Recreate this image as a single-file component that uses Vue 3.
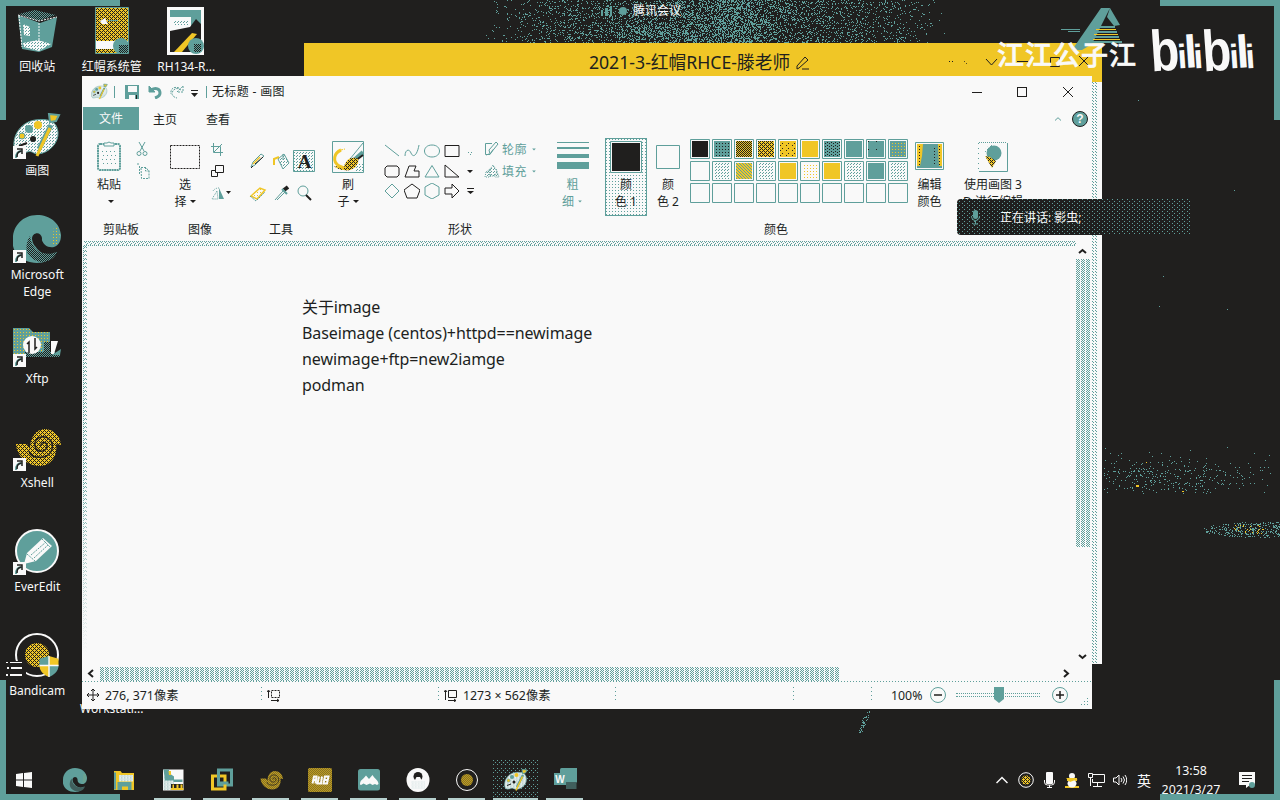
<script setup>
const D = '#201f1e', T = '#5f9f9b', Y = '#f0c626', W = '#f9f9f9'

let seed = 7
function rnd() {
  seed = (seed + 0x6d2b79f5) | 0
  let t = Math.imul(seed ^ (seed >>> 15), 1 | seed)
  t = (t + Math.imul(t ^ (t >>> 7), 61 | t)) ^ t
  return ((t ^ (t >>> 14)) >>> 0) / 4294967296
}
const px = (x, y) => `M${x} ${y}h1v1h-1z`
function scatter(x0, y0, x1, y1, density) {
  let d = ''
  for (let y = y0; y < y1; y++) for (let x = x0; x < x1; x++) if (rnd() < density(x, y)) d += px(x, y)
  return d
}
const bump = (v, c, w) => Math.exp(-((v - c) ** 2) / (w * w))
const nebula = scatter(470, 0, 950, 43, (x, y) => {
  const edge = Math.min(1, Math.max(0, (x - 480) / 90)) * Math.min(1, Math.max(0, (945 - x) / 90))
  return edge * (0.17 + 0.28 * bump(x, 725, 50) + 0.25 * bump(x, 650, 35) * bump(y, 32, 10))
})
const dust = scatter(1104, 438, 1272, 494, (x, y) => 0.085 * bump(y, 476, 15) * (0.35 + bump(x, 1150, 60)))
const disc = scatter(1202, 521, 1280, 538, (x, y) => {
  const r = ((x - 1262) / 60) ** 2 + ((y - 529.5) / 8) ** 2
  return r < 1 ? 0.24 : 0
})
const discGold = scatter(1228, 525, 1264, 534, () => 0.08)
const streak = scatter(858, 711, 870, 733, (x, y) => (Math.abs(x - 868 + (y - 711) * 0.4) < 2.5 ? 0.28 : 0))
const stars = scatter(1104, 90, 1274, 430, () => 0.0001)

const desktop = [
  { k: 'bin', t: ['回收站'] }, { k: 'paint', t: ['画图'], s: 1 }, { k: 'edge', t: ['Microsoft', 'Edge'], s: 1 },
  { k: 'xftp', t: ['Xftp'], s: 1 }, { k: 'shell', t: ['Xshell'], s: 1 }, { k: 'ever', t: ['EverEdit'], s: 1 }, { k: 'bandi', t: ['Bandicam'] },
  { k: 'doc1', t: ['红帽系统管'] }, {}, {}, {}, {}, {}, { t: ['Workstati...'], low: 1 },
  { k: 'doc2', t: ['RH134-R...'] },
]
const tasks = ['edge', 'folder', 'photo', 'vm', 'shell', 'pub', 'meet', 'qq', 'bandi', 'paint', 'word']
const swatches = [
  D, 'url(#dkT)', 'url(#dkW)', 'url(#dkY)', 'url(#spY)', Y, 'url(#dkT2)', T, 'url(#tD)', 'url(#tY)',
  W, 'url(#w25)', 'url(#yT)', 'url(#w25)', Y, 'url(#wY)', Y, 'url(#w25)', T, 'url(#w25)',
  ...Array(10).fill(W),
]
const shapes = [
  'M1 2L15 13', 'M1 13C1 7 5 5 7 10S13 13 15 2', 'M8 2C18 2 18 14 8 14S-2 2 8 2', 'M1 2.5h14v11H1z',
  'M3 3h10l2 2v7l-2 2H3l-2-2V5z', 'M1 14L5 3h7l-2 5h5v6z', 'M8 2.5L15 14H1z', 'M1 2v12h14z',
  'M8 1l7 7-7 7-7-7z', 'M8 1l8 6-3 8H3L0 7z', 'M8 0l7 4v8l-7 4-7-4V4z', 'M1 5h7V1l7 7-7 7v-4H1z',
]
const shapeInk = [T, T, T, D, D, D, T, D, T, D, T, D]
const lines = ['关于image', 'Baseimage (centos)+httpd==newimage', 'newimage+ftp=new2iamge', 'podman']
</script>

<template>
  <div class="screen">
    <svg class="defs" width="0" height="0">
      <defs>
        <pattern id="dkT" width="3" height="3" patternUnits="userSpaceOnUse"><path fill="#5f9f9b" d="M0 0h3v3H0z" /><path fill="#201f1e" d="M1 1h1v1H1z" /></pattern>
        <pattern id="dkT2" width="4" height="3" patternUnits="userSpaceOnUse"><path fill="#5f9f9b" d="M0 0h4v3H0z" /><path fill="#201f1e" d="M1 0h1v1H1zM3 1h1v1H3z" /></pattern>
        <pattern id="dkW" width="2" height="2" patternUnits="userSpaceOnUse"><path fill="#201f1e" d="M0 0h2v2H0z" /><path fill="#f0c626" d="M0 0h1v1H0zM1 1h1v1H1z" /></pattern>
        <pattern id="dkY" width="4" height="4" patternUnits="userSpaceOnUse"><path fill="#f0c626" d="M0 0h4v4H0z" /><path fill="#201f1e" d="M0 0h1v1H0zM2 0h1v1H2zM1 1h1v1H1zM0 2h1v1H0zM2 2h1v1H2zM3 3h1v1H3z" /></pattern>
        <pattern id="spY" width="6" height="5" patternUnits="userSpaceOnUse"><path fill="#f0c626" d="M0 0h6v5H0z" /><path fill="#201f1e" d="M2 1h1v1H2zM4 4h1v1H4z" /></pattern>
        <pattern id="tY" width="3" height="3" patternUnits="userSpaceOnUse"><path fill="#5f9f9b" d="M0 0h3v3H0z" /><path fill="#f0c626" d="M1 1h1v1H1z" /></pattern>
        <pattern id="tD" width="8" height="8" patternUnits="userSpaceOnUse"><path fill="#5f9f9b" d="M0 0h8v8H0z" /><path fill="#201f1e" d="M2 2h1v1H2z" /></pattern>
        <pattern id="yT" width="3" height="3" patternUnits="userSpaceOnUse"><path fill="#f0c626" d="M0 0h3v3H0z" /><path fill="#5f9f9b" d="M0 0h1v1H0zM1 1h1v1H1zM2 2h1v1H2z" /></pattern>
        <pattern id="wY" width="3" height="3" patternUnits="userSpaceOnUse"><path fill="#f9f9f9" d="M0 0h3v3H0z" /><path fill="#f0c626" d="M1 1h1v1H1z" /></pattern>
        <pattern id="w25" width="3" height="3" patternUnits="userSpaceOnUse"><path fill="#f9f9f9" d="M0 0h3v3H0z" /><path fill="#5f9f9b" d="M0 0h1v1H0zM1 2h1v1H1z" /></pattern>
        <pattern id="kT" width="2" height="2" patternUnits="userSpaceOnUse"><path fill="#201f1e" d="M0 0h2v2H0z" /><path fill="#5f9f9b" d="M0 0h1v1H0zM1 1h1v1H1z" /></pattern>

        <symbol id="bin" viewBox="0 0 48 48">
          <path fill="#5f9f9b" d="M5 8l4 34 17 3 13-5 5-30-17 6z" /><path fill="url(#kT)" d="M6 7L22 3l21 5-18 6z" />
          <path fill="none" stroke="#f9f9f9" stroke-width="1" stroke-dasharray="2 1" d="M5 8l21 6 18-4M26 16v24M6 9l3 31" />
          <path fill="url(#w25)" d="M10 17l7 3v9l-6-1zM10 36l15-3 13 4-12 7-15-4z" />
        </symbol>
        <symbol id="paint" viewBox="0 0 48 48">
          <path fill="url(#w25)" stroke="#5f9f9b" d="M22 9C9 11 0 23 1 35c1 9 7 8 13 6 5-2 6 2 11 2 11-1 21-11 20-22S35 7 22 9z" />
          <circle cx="16" cy="18" r="4" fill="#5f9f9b" /><circle cx="25" cy="14" r="4" fill="#f0c626" /><circle cx="9" cy="25" r="3" fill="#f0c626" stroke="#5f9f9b" /><circle cx="20" cy="28" r="3" fill="#201f1e" /><path d="M6 35l8-3" stroke="#201f1e" stroke-width="2" />
          <path stroke="#5f9f9b" stroke-width="5" d="M38 14L26 38" /><path stroke="#f0c626" stroke-width="3" d="M37 17L28 36l-4 9" /><path fill="#f0c626" stroke="#5f9f9b" stroke-width="2" d="M36 3l10 1-3 6-6 1z" />
        </symbol>
        <symbol id="edge" viewBox="0 0 48 48">
          <path fill="#5f9f9b" d="M24 0C10 0 0 11 0 23v8c2 10 12 17 24 17 8 0 15-4 19-11-8 5-17 1-20-5 3 0 6-5 5-11 1 10 8 12 13 11 5-2 7-6 7-12C47 8 37 0 24 0z" />
          <path fill="#201f1e" d="M19 24c0-7 9-8 10-1 0 4-3 8 5 10-10 3-14-2-15-9z" /><path fill="url(#kT)" d="M17 21c-7 11-4 23 11 26 8 0 14-4 16-10-12 5-25 0-27-16z" />
          <path fill="url(#tY)" d="M41 12h4l2 8-3 9h-5z" />
        </symbol>
        <symbol id="xftp" viewBox="0 0 48 48">
          <path fill="url(#tY)" d="M0 9h16l4 4h17v23H0z" /><path fill="url(#kT)" d="M12 33h35v5H12zM31 23h6v13h-6z" /><path fill="#f9f9f9" d="M38 22h7l-4 13h-3z" /><path fill="#5f9f9b" d="M39 36l9-6-1 6z" />
          <circle cx="19" cy="26" r="9" fill="#f9f9f9" /><path fill="none" stroke="#201f1e" stroke-width="1.500" d="M16 34V23l-2 2M22 19v11l2-2" />
        </symbol>
        <symbol id="shell" viewBox="0 0 48 48">
          <path fill="url(#dkY)" d="M3 21h11l3 5c0-12 6-19 14-20 9 0 16 6 17 16l-5-1c2 13-6 22-16 22C14 43 4 33 3 21z" />
          <path fill="none" stroke="#201f1e" stroke-width="1.500" d="M16 28c1 4 4 6 8 6 11 2 17-6 15-14-4-10-19-7-17 3 2 8 13 6 12-1-1-4-7-3-6 1" />
        </symbol>
        <symbol id="ever" viewBox="0 0 48 48">
          <circle cx="24" cy="24" r="21" fill="#5f9f9b" stroke="#f9f9f9" stroke-width="2" /><path fill="#f9f9f9" d="M11 37l3-11 16-15 9 8-16 15z" /><path fill="none" stroke="#5f9f9b" stroke-dasharray="2 1" d="M14 27l8 7M18 28l15-13M21 31l14-13M29 12l8 8" />
        </symbol>
        <symbol id="bandi" viewBox="0 0 48 48">
          <circle cx="24" cy="24" r="21" fill="none" stroke="#f9f9f9" stroke-width="2" /><circle cx="24" cy="24" r="12" fill="url(#dkY)" />
        </symbol>
        <symbol id="shield" viewBox="0 0 20 22"><path fill="#5f9f9b" d="M10 0v10H0V3zM10 10h10c0 6-5 10-10 12z" /><path fill="#f0c626" d="M10 0l10 3v7H10zM0 10h10v12C5 20 0 16 0 10z" /><path stroke="#f9f9f9" stroke-width="1.500" d="M10 0v22M0 10h20" /></symbol>
        <symbol id="doc1" viewBox="0 0 48 48">
          <path fill="url(#dkY)" stroke="#5f9f9b" d="M7.500.500h33v46h-33z" /><path fill="#f9f9f9" d="M8 34h32v8H8zM12 14l5-3 2 4 1 2h-6z" /><path fill="#5f9f9b" d="M20 13h10v1H20z" /><circle cx="33" cy="39" r="8" fill="#5f9f9b" /><path fill="url(#kT)" d="M31 38h9v8h-9z" />
        </symbol>
        <symbol id="doc2" viewBox="0 0 48 48">
          <path fill="#f9f9f9" d="M5 0h37v48H5z" /><path fill="#5f9f9b" d="M8 3h31v7H8zM29 10h10v24H29z" /><path fill="#201f1e" d="M8 24l20-4 6-8 5 5v15l-6 9v4H8z" /><path fill="#f0c626" d="M30 26l5 1-15 18h-8z" /><circle cx="34" cy="39" r="8" fill="#5f9f9b" /><path fill="url(#kT)" d="M32 37h7v8h-7z" /><path fill="url(#w25)" d="M12 14h14v4H12z" />
        </symbol>
        <symbol id="folder" viewBox="0 0 48 48"><path fill="#f0c626" d="M4 6h13l3 4h24v34H4z" /><path fill="url(#w25)" d="M14 14h28v13H14z" /><path fill="#5f9f9b" d="M11 28h28v16h-7v-7H20v7h-9zM4 9h4v34H4z" /></symbol>
        <symbol id="photo" viewBox="0 0 48 48"><path fill="#f9f9f9" d="M4 3h41v42H4z" /><path fill="url(#w25)" d="M5 17h21v27H5z" /><path fill="#5f9f9b" d="M5 3h11v7l10 7v8H8zM25 23h18v5H25z" /><path fill="#201f1e" d="M20 32h24v11H20z" /><path fill="#f0c626" d="M15 6h5v8h-4zM20 40h25v4H20zM23 33h3v8h-3zM31 33h4v8h-4zM39 33h4v8h-4z" /></symbol>
        <symbol id="vm" viewBox="0 0 48 48"><path fill="none" stroke="#5f9f9b" stroke-width="6" d="M17 4h26v30H17z" /><path fill="none" stroke="#f0c626" stroke-width="6" d="M5 16h25v26H5z" /><path stroke="#5f9f9b" stroke-width="6" d="M17 12v18h20" fill="none" /></symbol>
        <symbol id="pub" viewBox="0 0 48 48"><rect width="48" height="48" rx="3" fill="url(#dkY)" /><path fill="none" stroke="#f9f9f9" stroke-width="4" d="M9 31l3-14h5l-2 14M22 17l-3 14h7l2-14M31 31l3-14h7l-3 14zM11 24h6M32 24h7" /></symbol>
        <symbol id="meet" viewBox="0 0 48 48"><rect x="2" y="2" width="44" height="43" rx="5" fill="#5f9f9b" /><path fill="#f9f9f9" d="M6 33c0-10 5-8 12-18l6 7 7-8c4 8 12 10 12 18l-3 2-4-2-5 2-5-3-7 3-6-3-5 3z" /></symbol>
        <symbol id="qq" viewBox="0 0 48 48"><ellipse cx="24" cy="24" rx="23" ry="24" fill="#f9f9f9" /><circle cx="24" cy="17" r="9" fill="#201f1e" /><path fill="#f9f9f9" d="M21 18h7l4 8H17z" /><path fill="url(#w25)" d="M10 26h28v16H10z" opacity=".3" /></symbol>
        <symbol id="word" viewBox="0 0 48 48"><path fill="#5f9f9b" d="M14 3q0-3 3-3h31v29H14z" /><path fill="url(#kT)" d="M26 29h21v13H26z" /><path fill="#5f9f9b" d="M2 10h24v24H2z" /><text x="14" y="30" text-anchor="middle" class="wletter">W</text></symbol>
        <symbol id="arrow" viewBox="0 0 13 13"><path fill="#f9f9f9" d="M0 0h13v13H0z" /><path fill="none" stroke="#5f9f9b" stroke-width="2" d="M3 12c0-5 2-7 6-7" /><path fill="none" stroke="#201f1e" stroke-width="1.500" d="M4 11c0-4 1-5 4-6M4 3h5v5" /></symbol>
      </defs>
    </svg>

    <svg class="wall" width="1280" height="800" shape-rendering="crispEdges">
      <path :d="nebula + dust + disc + streak + stars" fill="#5f9f9b" />
      <path :d="discGold" fill="#f0c626" /><path d="M1136 485h3v2h-3zM1182 491h2v1h-2zM1146 462h1v1h-1z" fill="#f0c626" />
    </svg>

    <div class="meeting">
      <svg width="27" height="10"><path fill="#5f9f9b" d="M0 4h2v6H0zM4 3h3v7H4zM9 0h2v10H9z" /><circle cx="22" cy="5" r="4" fill="#5f9f9b" /></svg>
      <span>腾讯会议</span>
    </div>

    <div class="desk">
      <div v-for="(d, i) in desktop" :key="i" class="dicon" :class="{ low: d.low }">
        <div class="pic">
          <svg v-if="d.k" width="48" height="48"><use :href="'#' + d.k" /></svg>
          <svg v-if="d.s" class="badge" width="13" height="13"><use href="#arrow" /></svg>
          <svg v-if="d.k === 'bandi'" class="badge sh" width="20" height="21"><use href="#shield" /></svg>
          <svg v-if="d.k === 'bandi'" class="badge ls" width="20" height="16"><path fill="#201f1e" d="M4 0h16v16H4z" /><path fill="#f9f9f9" d="M0 1h2v1H0zM4 1h12v1H4zM1 6h2v2H1zM5 6h11v2H5zM0 13h2v2H0zM4 13h12v2H4z" /></svg>
        </div>
        <span v-for="t in d.t" :key="t">{{ t }}</span>
      </div>
    </div>

    <div class="backwin">
      <div class="backtitle">
        <span>2021-3-红帽RHCE-滕老师</span>
        <svg width="14" height="14" fill="none" stroke="#201f1e"><path d="M1 13v-3l8-9 3 3-9 8zM6 13h7" /></svg>
      </div>
    </div>
    <svg class="backbtns" width="150" height="22" fill="none" stroke="#201f1e"><path stroke-dasharray="1 2" d="M4 9.500h6M19 9l4 4" /><path d="M41 7l5.500 6L52 7M72 9.500h11M105.500 5.500h9v9h-9zM134 4l10 10M144 4l-10 10" /></svg>

    <main class="win">
      <header class="title">
        <svg class="pal" width="17" height="17"><use href="#paint" /></svg>
        <i class="sep"></i>
        <svg class="qa" width="14" height="14"><path fill="#5f9f9b" d="M0 0h14v14H0z" /><path fill="#f9f9f9" d="M3 1h9v6H3zM4 10h6v4H4z" /><path fill="#201f1e" d="M11 10h1v4h-1z" /></svg>
        <svg class="undo" width="14" height="14" fill="none" stroke="#5f9f9b"><path fill="#5f9f9b" d="M1 1v6h6z" /><path stroke-width="3" d="M3 5c5-3 9-1 9 3 0 2-2 4-5 5" /></svg>
        <svg class="redo" width="14" height="14" fill="none" stroke="#5f9f9b" stroke-dasharray="2 1"><path d="M13 1v6H7zM11 5C7 2 3 4 2 8c0 2 1 4 5 5M9 3C4 1 0 4 1 9" /></svg>
        <svg class="more" width="7" height="7"><path fill="#201f1e" d="M0 0h7v1H0zM0 3h7L3.500 7z" /></svg>
        <i class="sep s2"></i>
        <span>无标题 - 画图</span>
        <svg class="ctl" width="104" height="12" fill="none" stroke="#201f1e" shape-rendering="crispEdges"><path d="M0 6.500h10M45.500 1.500h9v9h-9zM91 1l10 10M101 1L91 11" /></svg>
      </header>
      <nav class="tabs">
        <b>文件</b><span>主页</span><span>查看</span>
        <svg width="6" height="4" fill="none" stroke="#5f9f9b"><path d="M0 3.500L3 .7l3 2.800" /></svg>
        <em>?</em>
      </nav>

      <section class="ribbon">
        <div class="grp" style="--w: 78px">
          <div class="body clip">
            <div class="big">
              <svg width="26" height="34"><rect x="2" y="4" width="22" height="26" rx="2" fill="none" stroke="#5f9f9b" stroke-width="2" stroke-dasharray="2 .5" /><path fill="#f9f9f9" stroke="#5f9f9b" d="M8 6V3h3l2-1 2 1h3v3z" /><path stroke="#5f9f9b" stroke-dasharray="1 3" d="M6 11.500h15M7 15.500h14M6 19.500h14M7 23.500h14" /></svg>
              <span>粘贴</span><span><i class="dn solo"></i></span>
            </div>
            <div class="stack">
              <svg width="14" height="16" fill="none" stroke="#5f9f9b"><path d="M3 1l5 9M9 1L4 10" /><circle cx="3" cy="12.500" r="2" /><circle cx="9" cy="12.500" r="2" /></svg>
              <svg width="14" height="16" fill="none" stroke="#5f9f9b" stroke-dasharray="2 1"><path d="M1 1h3M3.500 3v8M5 4.500h5l3 4v7H5.500zM9.500 4v4h4" /></svg>
            </div>
          </div>
          <label>剪贴板</label>
        </div>
        <div class="grp" style="--w: 80px">
          <div class="body img">
            <div class="big">
              <svg width="30" height="34"><path d="M.5 5.500h29v23H.5z" fill="none" stroke="#201f1e" stroke-dasharray="2 1" /></svg>
              <span>选</span><span>择<i class="dn r"></i></span>
            </div>
            <div class="stack s3">
              <svg width="22" height="13" fill="none" stroke="#5f9f9b"><path d="M2.500 0v9.500H12M0 3.500h9.500V13M3 9l8-8" /></svg>
              <svg width="22" height="13" fill="none" stroke="#201f1e"><path d="M4.500.5h8v7h-8zM4 5.500H.5v6h6V8" /></svg>
              <svg width="22" height="13"><path fill="#5f9f9b" d="M8 1l5 11H8z" /><path fill="none" stroke="#5f9f9b" stroke-dasharray="1 1" d="M6 4L1 12h6zM2 4q2-3 6-3" /><path fill="#201f1e" d="M15 4h5l-2.500 3z" /></svg>
            </div>
          </div>
          <label>图像</label>
        </div>
        <div class="grp" style="--w: 82px">
          <div class="body tools">
            <svg width="22" height="22" fill="none"><path stroke="#5f9f9b" d="M4 17l2-5 8-8 3 2-9 9z" /><path stroke="#f0c626" stroke-width="1.500" d="M6 14l7-7" /><path stroke="#201f1e" d="M4 18l2-2M8 14l8-7" /></svg>
            <svg width="22" height="22" fill="none"><path fill="url(#w25)" stroke="#5f9f9b" d="M7 9l6-5 5 9-6 6zM12 10V4" /><path stroke="#f0c626" stroke-width="2" d="M3 15V9l5-2" /></svg>
            <svg width="22" height="22"><path fill="url(#w25)" stroke="#5f9f9b" d="M.5.5h21v21H.5z" /><text x="11.500" y="18" text-anchor="middle" class="ta">A</text></svg>
            <svg width="22" height="22"><path fill="url(#wY)" stroke="#f0c626" stroke-width="1.500" d="M4 14l9-8 5 2-8 9z" /><path fill="none" stroke="#5f9f9b" stroke-dasharray="2 1" d="M3 14l6 5 9-9" /></svg>
            <svg width="22" height="22" fill="none"><path stroke="#5f9f9b" d="M4 18l8-9M6 18l8-8" /><path stroke="#201f1e" stroke-width="4" d="M13 8l4-3" /><path stroke="#5f9f9b" stroke-width="2" d="M11 7l5 5" /></svg>
            <svg width="22" height="22" fill="none"><circle cx="10" cy="9" r="5" stroke="#5f9f9b" /><path stroke="#201f1e" stroke-width="2" d="M13 13l5 5" /></svg>
          </div>
          <label>工具</label>
        </div>
        <div class="grp" style="--w: 52px">
          <div class="body ctr">
            <div class="big">
              <svg width="32" height="34"><path fill="#f9f9f9" stroke="#5f9f9b" d="M.5 1.500h31v31H.5z" /><path stroke="#5f9f9b" fill="none" d="M31 3L18 19" /><path stroke="#5f9f9b" stroke-width="4" d="M31 12l-9 8" /><path stroke="#201f1e" stroke-width="2" d="M31 15l-8 6" /><path fill="url(#dkY)" d="M12 27c2-8 8-11 14-8 2 8-8 13-14 11-4 0-8-2-10-4z" /><path fill="none" stroke="#f0c626" stroke-width="3" d="M9 10C2 13 0 21 7 26l5 2" /><path fill="none" stroke="#f0c626" stroke-dasharray="2 1" d="M9 10l4-1" /><path fill="url(#w25)" d="M25 24h6v8h-8z" /></svg>
              <span>刷</span><span>子<i class="dn r"></i></span>
            </div>
          </div>
        </div>
        <div class="grp" style="--w: 172px">
          <div class="body shp">
            <div class="gal">
              <svg v-for="(s, i) in shapes" :key="i" width="16" height="16" fill="none" :stroke="shapeInk[i]"><path :d="s" /></svg>
            </div>
            <svg width="9" height="60"><path fill="#5f9f9b" d="M2 12h1v1H2zM5 12h1v1H5zM4 14h1v1H4z" /><path fill="#201f1e" d="M1 30h6l-3 3zM1 48h7v1H1zM1 51h7l-3.500 3z" /></svg>
            <div class="fills">
              <div><svg width="16" height="16" fill="none" stroke="#5f9f9b"><path d="M8 2.500H1.500v11H6l3-5M6 13L14 3l-2-2-7 8zM5 13l-3 1" /></svg>轮廓<i class="dn t"></i></div>
              <div><svg width="16" height="16" fill="url(#w25)" stroke="#5f9f9b" stroke-dasharray="1 1"><path d="M5 8l4-6 4 6-2 5H6zM2 9l4-3v8H1zM12 6l3 8h-4" /></svg>填充<i class="dn t"></i></div>
            </div>
          </div>
          <label>形状</label>
        </div>
        <div class="grp" style="--w: 53px">
          <div class="body ctr">
            <div class="big teal">
              <svg width="32" height="34"><path fill="#5f9f9b" d="M0 2h32v1H0zM0 7h32v2H0zM0 14h32v4H0zM0 22h32v7H0z" /></svg>
              <span>粗</span><span>细<i class="dn r t"></i></span>
            </div>
          </div>
        </div>
        <div class="grp" style="--w: 354px">
          <div class="body cols">
            <div class="big c1"><svg width="32" height="32"><path fill="#f9f9f9" stroke="#5f9f9b" d="M.5.500h31v31H.5z" /><path fill="#201f1e" d="M2 2h28v28H2z" /></svg><span>颜</span><span>色 1</span></div>
            <div class="big c2"><svg width="24" height="34"><path fill="none" stroke="#5f9f9b" d="M.5 5.500h23v23H.5z" /></svg><span>颜</span><span>色 2</span></div>
            <div class="sw">
              <svg v-for="(c, i) in swatches" :key="i" width="20" height="20"><path fill="#f9f9f9" stroke="#5f9f9b" d="M.5.5h19v19H.5z" /><path :fill="c" d="M2 2h16v16H2z" /></svg>
            </div>
            <div class="big c3"><svg width="29" height="34"><path fill="#f9f9f9" stroke="#5f9f9b" d="M.5 2.500h28v27H.5z" /><path fill="#5f9f9b" d="M2 4h25v24H2z" /><path fill="#f0c626" d="M2 4h6l-1 12-2 10H2zM23 4h4v22h-3z" /><path fill="none" stroke="#201f1e" stroke-dasharray="1 2" d="M4.500 6v20M19.500 8v18M24.500 6v20" /></svg><span>编辑</span><span>颜色</span></div>
          </div>
          <label>颜色</label>
        </div>
        <div class="grp" style="--w: 80px">
          <div class="body ctr">
            <div class="big">
              <svg width="30" height="34"><path fill="none" stroke="#5f9f9b" stroke-dasharray="1 1" d="M1 2.500h28" /><path fill="none" stroke="#5f9f9b" stroke-dasharray="1 4" d="M.5 3v28" /><path fill="none" stroke="#5f9f9b" d="M1 31.500h28.500V3" /><path fill="url(#w25)" d="M7 13c0-7 5-8 9-8v19z" /><circle cx="16" cy="13" r="7.500" fill="#5f9f9b" /><path fill="url(#dkY)" d="M7 16l5 1 6 4-4 7z" /></svg>
              <span>使用画图 3</span><span>D 进行编辑</span>
            </div>
          </div>
        </div>
      </section>

      <section class="work">
        <div class="strip"></div>
        <article><p v-for="(l, i) in lines" :key="i" :class="'l' + i">{{ l }}</p></article>
        <div class="vbar">
          <svg width="14" height="13" fill="none" stroke="#201f1e" stroke-width="2"><path d="M3 7l3.500-3L10 7" /></svg>
          <i></i>
          <svg width="14" height="13" fill="none" stroke="#201f1e" stroke-width="2"><path d="M3 4l3.500 3L10 4" /></svg>
        </div>
      </section>
      <div class="hbar">
        <svg width="18" height="14" fill="none" stroke="#201f1e" stroke-width="2"><path d="M11 3L7 6.500l4 3.500" /></svg><i></i>
        <svg class="rt" width="18" height="14" fill="none" stroke="#201f1e" stroke-width="2"><path d="M7 3l4 3.500L7 10" /></svg>
      </div>
      <footer>
        <div class="cell a"><svg width="12" height="12" fill="none" stroke="#201f1e"><path d="M6 0v12M0 6h12M4 2l2-2 2 2M4 10l2 2 2-2M2 4L0 6l2 2M10 4l2 2-2 2" /></svg>276, 371像素</div>
        <div class="cell b"><svg width="13" height="13" fill="none" stroke="#201f1e"><path d="M1.500 2v7M0 3l1.500-2L3 3M4 11.500h8M10 10l2 1.500-2 1.500" /><path stroke-dasharray="2 1" d="M4.500 1.500h8v7h-8z" /></svg></div>
        <div class="cell c"><svg width="13" height="13" fill="none" stroke="#201f1e"><path d="M1.500 2v9M0 3l1.500-2L3 3M4 11.500h8M10 10l2 1.500-2 1.500M4.500 1.500h8v7h-8z" /></svg>1273 × 562像素</div>
        <div class="cell d"></div><div class="cell e"></div>
        <div class="zoom">
          <span>100%</span>
          <svg width="16" height="16"><circle cx="8" cy="8" r="7.500" fill="none" stroke="#5f9f9b" /><path stroke="#201f1e" stroke-width="1.500" d="M4 8h8" /></svg>
          <div class="track"><i></i></div>
          <svg width="16" height="16"><circle cx="8" cy="8" r="7.500" fill="none" stroke="#5f9f9b" /><path stroke="#201f1e" stroke-width="1.500" d="M4 8h8M8 4v8" /></svg>
          <svg class="grip" width="8" height="8" fill="#5f9f9b"><path d="M6 0h1v1H6zM3 3h1v1H3zM6 3h1v1H6zM0 6h1v1H0zM3 6h1v1H3zM6 6h1v1H6z" /></svg>
        </div>
      </footer>
    </main>

    <div class="speak">
      <svg width="9" height="15"><rect x="2" y="0" width="5" height="9" rx="2.500" fill="#5f9f9b" /><path fill="none" stroke="#5f9f9b" d="M.5 6c0 6 8 6 8 0M4.500 11v3M2 14h5" /></svg>
      <span>正在讲话: 影虫;</span>
    </div>

    <svg class="mark" width="290" height="100">
      <path fill="#5f9f9b" d="M111 8h9l-18 36-10 6H82zM120 8l10 17-6 1-7-9zM71 29h19v1H71zM78 31h12v1H78z" />
      <path stroke="#f0c626" d="M106 29.500h20M104 34.500h24M103 39.500h27" /><path stroke="#5f9f9b" stroke-width="2" d="M105 27h20M103 32h24M102 37h27M101 42h31" />
      <text x="7" y="65" textLength="139" class="name" lengthAdjust="spacing">江江公子江</text>
      <g class="bili" transform="rotate(-4 210 50)">
        <text x="160" y="68" class="lb" textLength="29" lengthAdjust="spacingAndGlyphs">b</text><text x="187" y="67" class="li">i</text><text x="194" y="67" class="ll">l</text><text x="203" y="68" class="li">i</text>
      </g>
      <g class="bili" transform="rotate(-4 262 50)">
        <text x="212" y="68" class="lb" textLength="29" lengthAdjust="spacingAndGlyphs">b</text><text x="239" y="67" class="li">i</text><text x="246" y="67" class="ll">l</text><text x="255" y="68" class="li">i</text>
      </g>
    </svg>

    <div class="taskbar">
      <div class="start"><svg width="16" height="16" fill="#f9f9f9"><path d="M0 2l7-1v6.500H0zM8 1l8-1v7.500H8zM0 8.500h7V15l-7-1zM8 8.500h8V16l-8-1z" /></svg></div>
      <div v-for="(k, i) in tasks" :key="k" class="task" :class="{ run: i > 1, act: k === 'paint' }"><svg width="24" height="24"><use :href="'#' + k" /></svg></div>
      <div class="tray">
        <svg width="12" height="8" fill="none" stroke="#f9f9f9" stroke-width="1.500"><path d="M.5 7L6 1.500 11.500 7" /></svg>
        <svg class="m2" width="16" height="16"><circle cx="8" cy="8" r="7.300" fill="none" stroke="#f9f9f9" /><circle cx="8" cy="8" r="4.500" fill="url(#dkY)" /></svg>
        <svg class="m2" width="11" height="16" fill="none" stroke="#f9f9f9"><rect x="2" y="0" width="7" height="12" rx="1" fill="#f9f9f9" stroke="none" /><path d="M.5 8v2q0 3 3 3h4q3 0 3-3V8M5.500 13v2M3 15.500h5" /></svg>
        <svg class="m2" width="14" height="15"><circle cx="7" cy="3" r="3" fill="#f9f9f9" /><path fill="#f0c626" d="M2 5h10v3H2zM0 13h14v2H0z" /><ellipse cx="7" cy="10.500" rx="4.500" ry="4" fill="#f9f9f9" /><path fill="#f0c626" d="M1 5l12 1-8 3z" /></svg>
        <svg class="m1" width="17" height="14" fill="none" stroke="#f9f9f9"><path d="M5 1.500h11.500v8h-12V6M.5.5h4v4h-4zM2.500 5v8M9.500 10v3M5 13.500h9" /></svg>
        <svg width="14" height="12" fill="none" stroke="#f9f9f9"><path d="M.5 4v4H3l3 3V1L3 4zM8 4q2 2 0 4M10 2.500q3 3.500 0 7M12 1q3.500 5 0 10" /></svg>
        <span class="ime">英</span>
        <div class="clock"><span>13:58</span><span>2021/3/27</span></div>
        <svg class="note" width="17" height="17"><path fill="#f9f9f9" d="M0 0h16v13h-5l-4 3v-3H0z" /><path stroke="#201f1e" d="M3 3.500h10M3 6.500h10M3 9.500h7" /><circle cx="13" cy="13" r="3" fill="#5f9f9b" /></svg>
      </div>
    </div>

    <i class="fr tl"></i><i class="fr tr"></i><i class="fr bl"></i><i class="fr br"></i>
  </div>
</template>

<style>
html, body { background: #201f1e; overflow: hidden; }
</style>

<style scoped>
.screen { --dot: conic-gradient(at 1px 1px, transparent 75%, #5f9f9b 0); position: relative; width: 1280px; height: 800px; overflow: hidden; background: #201f1e; color: #201f1e; font: 12px/17px "Noto Sans", "Noto Sans CJK SC", sans-serif; }
svg { display: block; flex: none; }
.defs, .wall { position: absolute; left: 0; top: 0; }
.wletter { font: bold 20px "Liberation Sans", sans-serif; fill: #f9f9f9; }
.ta { font: bold 19px "Liberation Serif", serif; fill: #201f1e; }
.meeting { position: absolute; left: 601px; top: 2px; display: flex; align-items: center; gap: 5px; color: #f9f9f9; }
.desk { position: absolute; left: 0; top: 7px; display: grid; grid-template-rows: repeat(7, 104px); grid-auto-columns: 74.5px; grid-auto-flow: column; }
.dicon { display: flex; flex-direction: column; align-items: center; color: #f9f9f9; white-space: nowrap; }
.dicon.low { justify-content: flex-end; padding-bottom: 18px; box-sizing: border-box; }
.dicon.low .pic { display: none; }
.pic { position: relative; width: 48px; height: 48px; margin-bottom: 3px; }
.badge { position: absolute; left: 0; bottom: 0; }
.badge.sh { left: 26px; bottom: 2px; }
.badge.ls { left: -7px; bottom: 2px; }
.backwin { position: absolute; left: 304px; top: 43px; width: 798px; height: 621px; background: #f9f9f9; }
.backtitle { height: 39px; background: #f0c626; display: flex; justify-content: center; align-items: center; gap: 6px; font-size: 17.700px; box-sizing: border-box; padding-right: 7px; }
.backwin::after { content: ""; position: absolute; left: 788px; top: 39px; width: 6px; height: 581px; background: var(--dot) 0 0 / 3px 3px, var(--dot) 1px 1px / 3px 3px; }
.backbtns { position: absolute; left: 945px; top: 52px; }
.win { position: absolute; left: 82px; top: 76px; width: 1010px; height: 633px; background: #f9f9f9; display: flex; flex-direction: column; }
.title { height: 31px; display: flex; align-items: center; padding-left: 9px; flex: none; }
.title span { letter-spacing: .35px; margin-left: -1px; }
.sep { width: 1px; height: 12px; background: #5f9f9b; margin: 0 10px 0 6px; }
.s2 { margin: 0 6px 0 8px; }
.undo { margin-left: 9px; }
.redo { margin-left: 8px; }
.more { margin-left: 7px; margin-top: 3px; }
.ctl { margin-left: auto; margin-right: 16px; }
.tabs { height: 24px; display: flex; align-items: center; flex: none; padding-left: 1px; }
.tabs b { width: 56px; height: 23px; background: #5f9f9b; color: #f9f9f9; font-weight: 400; text-align: center; line-height: 23px; margin-top: -1px; }
.tabs span { margin-left: 14px; width: 24px; }
.tabs span + span { margin-left: 29px; }
.tabs svg { margin-left: auto; }
.tabs em { width: 14px; height: 14px; border: 1px solid #201f1e; border-radius: 50%; background: #5f9f9b; color: #f9f9f9; font: bold 12px/14px "Liberation Sans", sans-serif; text-align: center; margin: 0 4px 0 11px; }
.ribbon { height: 110px; display: flex; flex: none; }
.grp { width: var(--w); flex: none; display: flex; flex-direction: column; }
.grp label { text-align: center; margin-top: auto; padding-bottom: 3px; }
.body { display: flex; height: 85px; }
.ctr { justify-content: center; }
.big { display: flex; flex-direction: column; align-items: center; padding-top: 9px; white-space: nowrap; }
.big svg { margin-bottom: 2px; }
.big span { display: flex; align-items: center; height: 17px; white-space: pre; }
.teal { color: #5f9f9b; }
.dn { width: 0; height: 0; border: solid transparent; border-width: 3px 3px 0; border-top-color: #201f1e; }
.dn.r { margin-left: 3px; }
.dn.solo { margin-left: 4px; }
.dn.t { border-top-color: #5f9f9b; transform: scale(.6); }
.clip { padding-left: 14px; gap: 14px; }
.stack { display: flex; flex-direction: column; gap: 6px; padding-top: 10px; }
.s3 { gap: 9px; padding-top: 12px; }
.img { padding-left: 10px; gap: 11px; }
.tools { padding: 19px 0 0 7px; display: grid; grid-template-columns: 24px 22px 23px; grid-auto-rows: 32px; height: 66px; width: 70px; }
.shp { padding-left: 10px; }
.gal { display: grid; grid-template-columns: repeat(4, 20px); grid-auto-rows: 20px; padding-top: 12px; border: 0; }
.shp > svg { margin-top: 9px; margin-left: 2px; }
.fills { padding: 7px 0 0 9px; color: #5f9f9b; }
.fills div { display: flex; align-items: center; height: 22px; gap: 2px; letter-spacing: .4px; }
.fills .dn { margin-left: 2px; }
.cols { padding-left: 6px; }
.c1 { width: 40px; height: 76px; box-sizing: border-box; width: 42px; height: 78px; padding-top: 2px; margin-top: 7px; border: 1px solid #5f9f9b; background: var(--dot) 0 0 / 3px 3px; }
.c1 svg { margin-bottom: 3px; }
.c2 { width: 42px; }
.sw { display: grid; grid-template-columns: repeat(10, 22px); grid-auto-rows: 22px; padding-top: 8px; margin-left: 1px; }
.c3 { margin-left: 5px; }
.work { display: flex; height: 426px; flex: none; position: relative; border-top: 5px solid transparent; box-sizing: border-box; }
.work::before { content: ""; position: absolute; left: 2px; top: -5px; width: 992px; height: 5px; background: var(--dot) 0 0 / 4px 4px, var(--dot) 1px 1px / 4px 4px, var(--dot) 3px 2px / 4px 4px, var(--dot) 2px 3px / 4px 4px, var(--dot) 2px 0 / 4px 4px; }
.strip { width: 4px; margin: 0 1px; height: 410px; background: var(--dot) 0 0 / 2px 4px, var(--dot) 1px 1px / 2px 4px, var(--dot) 0 2px / 4px 4px; mask-image: linear-gradient(#000, #000 55%, transparent); }
article { flex: 1; padding: 48px 0 0 214px; font-size: 16px; line-height: 26px; letter-spacing: -.09px; }
article p { margin: 0; white-space: nowrap; }
.vbar { width: 14px; margin-right: 2px; display: flex; flex-direction: column; height: 418px; }
.vbar i, .hbar i { background: var(--dot) 0 0 / 5px 2px, var(--dot) 2px 0 / 5px 2px, var(--dot) 1px 1px / 5px 2px, var(--dot) 3px 1px / 5px 2px; }
.vbar i { height: 288px; margin-bottom: auto; }
.hbar { display: flex; height: 15px; flex: none; background: var(--dot) 0 14px / 3px 15px; }
.hbar i { width: 739px; height: 14px; }
.hbar .rt { margin-left: auto; margin-right: 17px; }
footer { display: flex; height: 26px; align-items: center; font-size: 12.350px; }
.cell { height: 20px; display: flex; align-items: center; gap: 6px; box-sizing: border-box; background: var(--dot) right 0 top 0 / 100% 4px; background-position: calc(100% - 1px) 0; padding-left: 5px; white-space: nowrap; }
.cell { background: none; position: relative; }
.cell::after { content: ""; position: absolute; right: 0; top: 2px; width: 1px; height: 16px; background: var(--dot) 0 0 / 1px 4px; }
.a { width: 180px; }
.b, .c { width: 177px; }
.d { width: 178px; }
.e { width: 78px; }
.zoom { display: flex; align-items: center; margin-left: auto; }
.zoom > span { width: 39px; }
.track { width: 84px; height: 2px; border: dotted #5f9f9b; border-width: 1px 0; margin: 0 12px 0 10px; display: flex; align-items: center; }
.track i { width: 10px; height: 16px; margin-left: 38px; background: #5f9f9b; clip-path: polygon(0 0, 100% 0, 100% 75%, 50% 100%, 0 75%); }
.grip { margin: 14px 3px 0 13px; }
.speak { position: absolute; left: 957px; top: 199px; width: 235px; height: 36px; box-sizing: border-box; border-radius: 4px; padding-left: 14px; display: flex; align-items: center; color: #f9f9f9; background: var(--dot) 0 0 / 5px 4px, var(--dot) 2px 2px / 5px 4px, #201f1e; }
.speak span { margin-left: 20px; }
.mark { position: absolute; left: 990px; top: 0; overflow: visible; }
.name { font: 500 27px "Noto Sans CJK SC", sans-serif; fill: #f9f9f9; stroke: #f9f9f9; stroke-width: .6px; }
.bili { fill: #f9f9f9; font-family: "Liberation Sans", sans-serif; font-weight: bold; }
.lb { font-size: 58px; }
.li { font-size: 34px; }
.ll { font-size: 46px; }
.taskbar { position: absolute; left: 0; top: 760px; width: 1280px; height: 40px; display: flex; }
.start { width: 50px; display: flex; align-items: center; justify-content: center; box-sizing: border-box; padding-right: 2px; }
.task { width: 37px; margin: 0 6px; display: flex; align-items: center; justify-content: center; box-sizing: border-box; border-bottom: 2px solid transparent; padding-top: 2px; }
.task.run { border-bottom-color: #b6d0ce; }
.task.act { width: 45px; margin: 0 2px; background: var(--dot) 0 0 / 4px 4px, var(--dot) 2px 2px / 4px 8px; background-clip: padding-box; }
.tray { margin-left: auto; display: flex; align-items: center; padding-right: 24px; gap: 8px; }
.m2 { margin-left: 2px; }
.m1 { margin-left: 1px; }
.ime { color: #f9f9f9; font-size: 14px; width: 14px; margin-left: 2px; }
.clock { display: flex; flex-direction: column; align-items: center; color: #f9f9f9; font-size: 12.400px; line-height: 19px; width: 60px; margin-left: 2px; }
.note { margin-left: 10px; }
.fr { position: absolute; width: 120px; height: 120px; box-sizing: border-box; border: 0 solid #5f9f9b; }
.tl { left: 0; top: 0; border-width: 6px 0 0 6px; }
.tr { right: 0; top: 0; border-width: 6px 6px 0 0; }
.bl { left: 0; bottom: 0; border-width: 0 0 6px 6px; }
.br { right: 0; bottom: 0; border-width: 0 6px 6px 0; }
</style>
